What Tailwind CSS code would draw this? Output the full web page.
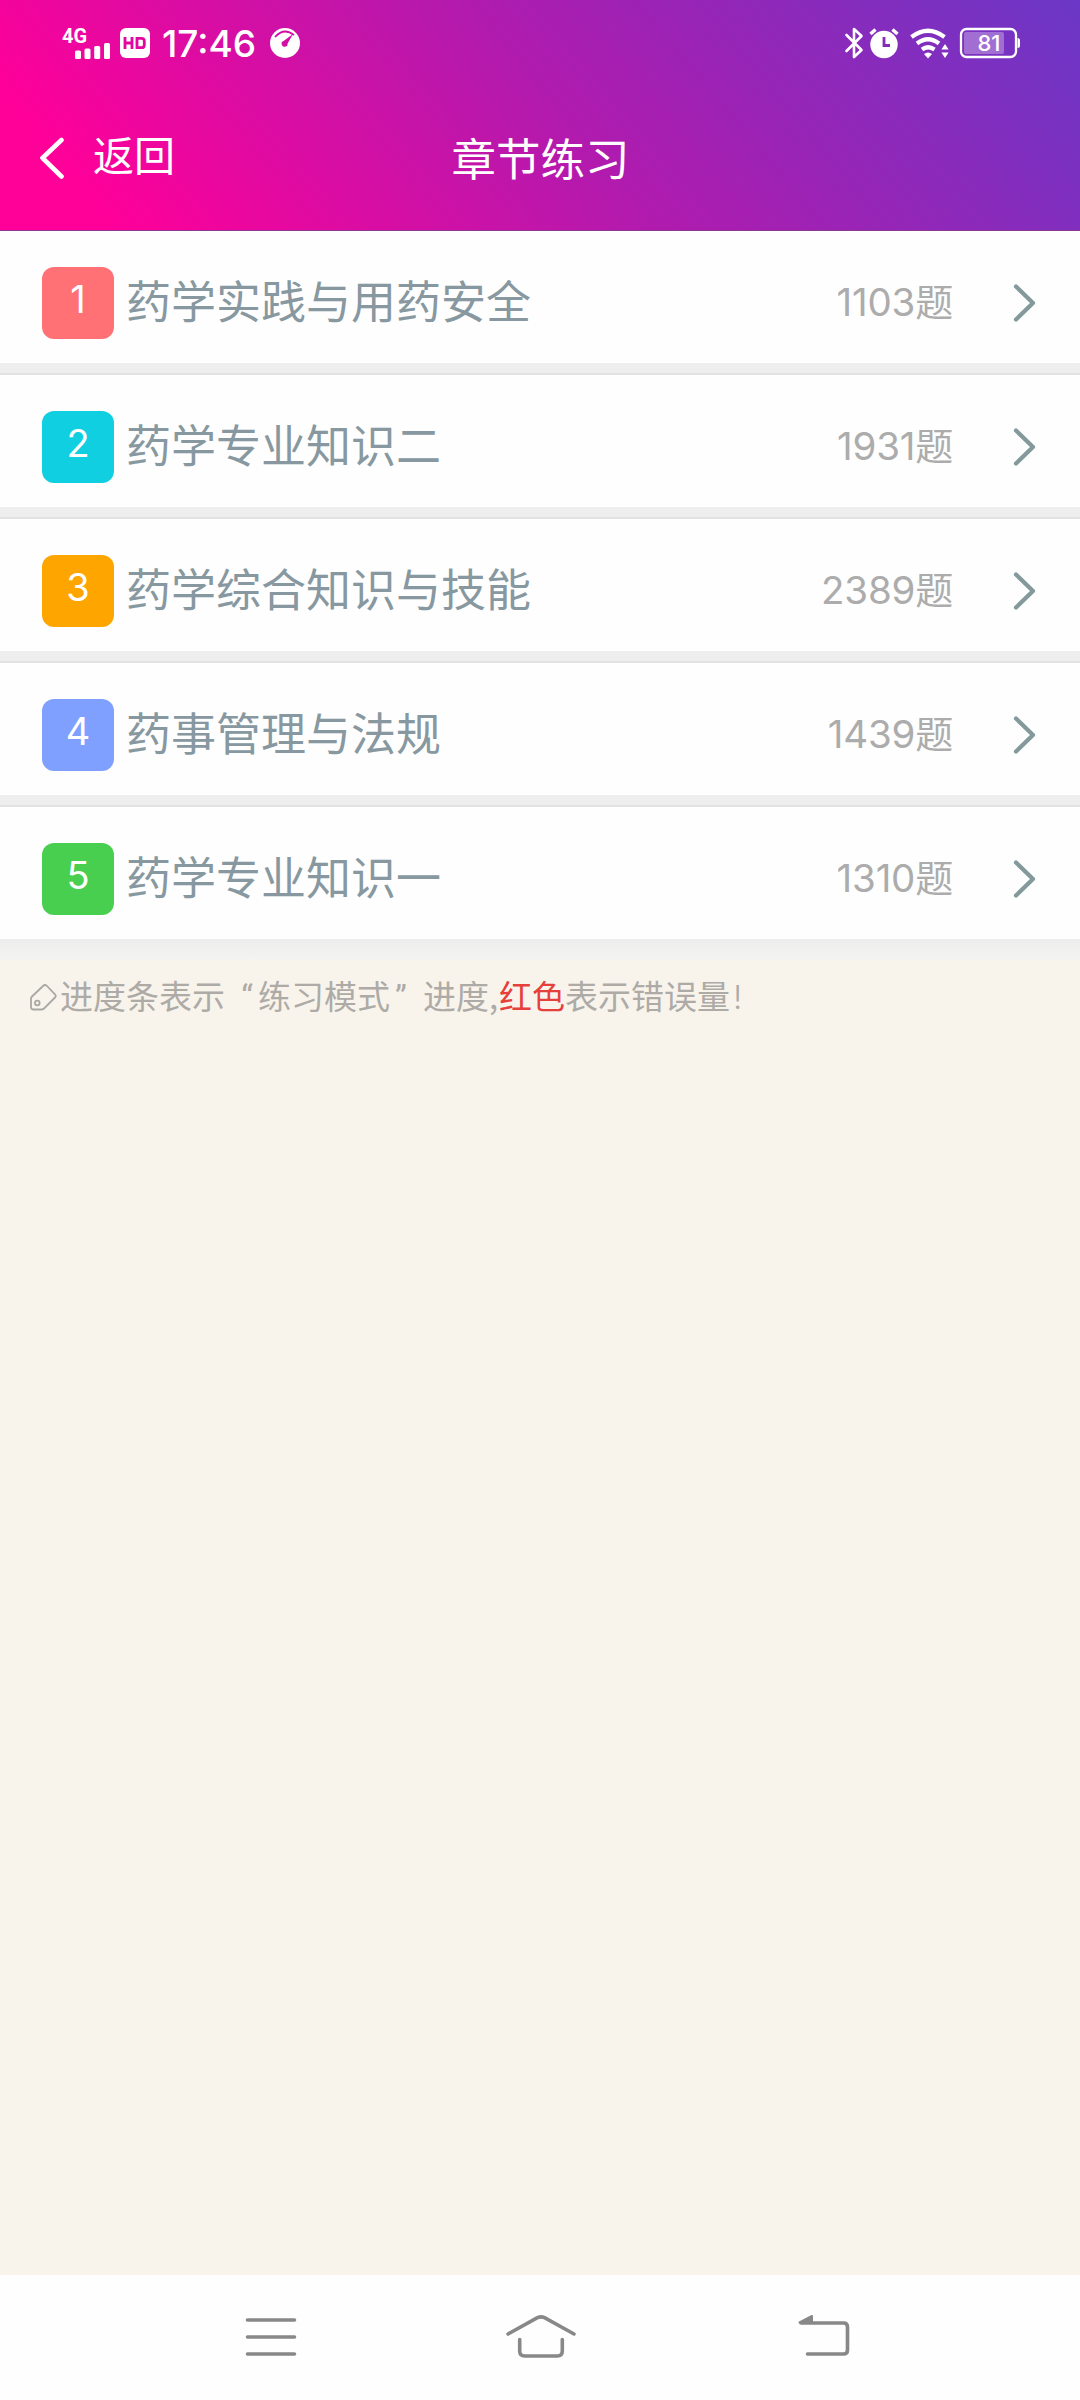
<!DOCTYPE html>
<html lang="zh-CN">
<head>
<meta charset="utf-8">
<title>章节练习</title>
<script src="https://cdn.jsdelivr.net/npm/@tailwindcss/browser@4"></script>
</head>
<body class="w-[1080px] h-[2400px] flex flex-col bg-[#f8f4ec] overflow-hidden font-['Inter','Noto_Sans_CJK_SC',sans-serif]">
<header class="h-[231px] shrink-0 flex flex-col text-white bg-[linear-gradient(50deg,#ff0099_9%,#b01bae_52%,#6b37c6)] border-b border-[#8a3a8e]">
  <div class="h-[86px] flex items-center justify-between pl-[56px] pr-[58px]">
    <div class="flex items-center">
      <svg class="w-[56px] h-[44px]" viewBox="56 20 56 44" fill="#fff">
        <text x="62" y="42" font-family="Roboto" font-weight="700" font-size="20" textLength="25" lengthAdjust="spacingAndGlyphs">4G</text>
        <rect x="75" y="49.500" width="6" height="8.500" rx="1.500"/><rect x="84.500" y="47.500" width="6" height="10.500" rx="1.500"/><rect x="94.200" y="45" width="6" height="13" rx="1.500"/><rect x="104" y="42" width="6" height="16" rx="1.500"/>
      </svg>
      <svg class="w-[30px] h-[30px] ml-2" viewBox="0 0 30 30"><rect width="30" height="30" rx="6" fill="#fff"/><path d="M5 9v12M12 9v12M5 15h7M17 10.300v9.400h4.500q2.800 0 2.800-2.800v-3.800q0-2.800-2.800-2.800z" fill="none" stroke="#e0069f" stroke-width="2.800"/></svg>
      <span class="ml-[12px] w-[96px] text-[37px] leading-none font-medium whitespace-nowrap">17:46</span>
      <svg class="w-[30px] h-[30px] ml-3" viewBox="0 0 30 30"><circle cx="15" cy="15" r="15" fill="#fff"/><path d="M5 9Q14-1 24 7" fill="none" stroke="#d20ca4" stroke-width="1.800"/><path d="M23 6 17.600 15.500a3 3 0 1 1-4-2.500z" fill="#d20ca4"/></svg>
    </div>
    <svg class="w-[180px] h-[36px]" viewBox="842 25 180 36" fill="none" stroke="#fff">
      <path d="m846.500 35 15 15-7.500 7V29l7.500 7-15 15" stroke-width="2.600" stroke-linejoin="round" stroke-linecap="round"/>
      <circle cx="884" cy="44.500" r="13.700" fill="#fff" stroke="none"/>
      <path d="m870.500 34 5-4.500M897.500 34l-5-4.500" stroke-width="3.400"/>
      <path d="M884 37v8.500h6" stroke="#862bb7" stroke-width="2.800"/>
      <path d="M911.500 37q16.500-12.500 33 0M917 43.500q11-8.500 22 0M922 49.500q6-4.500 12.500 0" stroke-width="4.200"/>
      <path d="M924 54q4-3 8 0l-4 4.500z" fill="#fff" stroke="none"/>
      <path d="m945 44 3.600 5.500h-7.200zM945 58l3.600-5.500h-7.200z" fill="#fff" stroke="none"/>
      <rect x="961" y="29" width="55" height="28" rx="5.500" stroke-width="2.300"/>
      <rect x="964" y="32" width="40" height="22" rx="2" fill="#fff" fill-opacity=".3" stroke="none"/>
      <path d="M1017.500 38q2.500 0 2.500 2.500v5q0 2.500-2.500 2.500z" fill="#fff" stroke="none"/>
      <text x="989" y="50.700" text-anchor="middle" font-family="Inter" font-size="21.500" font-weight="500" textLength="23" lengthAdjust="spacingAndGlyphs" fill="#fff" stroke="none">81</text>
    </svg>
  </div>
  <div class="h-[144px] grid grid-cols-3 items-start pt-[43px]">
    <div class="flex items-center pl-[39px] h-[58px]">
      <svg class="w-[26px] h-[42px]" viewBox="0 0 26 42"><path d="M22.500 3 3.500 21 22.500 39.500" fill="none" stroke="#fff" stroke-width="4.600" stroke-linecap="round" stroke-linejoin="round"/></svg>
      <span class="ml-[28px] text-[41px] leading-[58px] -mt-1">返回</span>
    </div>
    <h1 class="text-center text-[44.500px] leading-[60px] pt-px pl-px">章节练习</h1>
  </div>
</header>
<main id="list" class="flex flex-col shrink-0"></main>
<p class="flex items-center pl-[29px] mt-[12px] h-[50px] text-[33px] text-[#aeaba7] font-['Noto_Sans_CJK_SC',sans-serif] whitespace-nowrap">
  <svg class="w-[29px] h-[29px] mr-[2px]" viewBox="0 0 29 29" fill="none" stroke="#aaa8a4" stroke-width="1.800"><path d="M2 15.500v8.500q0 2.500 2.500 2.500h8q1.500 0 2.500-1l11-11q1.500-1.500 0-3.200L18 3q-2-2-4 0L3 13.500q-1 1-1 2z"/><circle cx="8.300" cy="20" r="2.300"/></svg>
  <span>进度条表示<span class="inline-block w-[33px] pr-[5px] text-right font-['Roboto']">“</span>练习模式<span class="inline-block w-[33px] pl-[5px] font-['Roboto']">”</span>进度<span class="inline-block w-[10px]">,</span><span class="text-[#e5403b]">红色</span>表示错误量<span class="ml-[3px] font-light font-['Inter']">!</span></span>
</p>
<nav class="mt-auto h-[125px] shrink-0 bg-[#fefefe]">
  <svg class="w-full h-full" viewBox="0 2275 1080 125" fill="none" stroke="#888" stroke-linecap="round" stroke-linejoin="round">
    <path d="M247.500 2320h47M247.500 2337h47M247.500 2354h47" stroke-width="3.600"/>
    <path d="M508 2334 537.500 2317.700q3.500-1.600 7 0L574 2334M519.700 2339.500v11.500q0 5 5 5h32.600q5 0 5-5v-11.500" stroke-width="3.600"/>
    <path d="M801 2323h42.500q4 0 4 4v23q0 4-4 4H807.500" stroke-width="3.600"/><path d="M799.500 2322.500 812 2316v6.500z" fill="#888" stroke-width="2"/>
  </svg>
</nav>
<script>
const rows = [
  ['药学实践与用药安全', '1103', '#ff7175'],
  ['药学专业知识二', '1931', '#10cfe0'],
  ['药学综合知识与技能', '2389', '#ffa500'],
  ['药事管理与法规', '1439', '#80a0ff'],
  ['药学专业知识一', '1310', '#48cf50'],
];
document.getElementById('list').innerHTML = rows.map(([name, count, color], i) => `
  <section class="flex flex-col">
    <div class="h-[132px] bg-[#fefefe] flex items-center pl-[42px] pr-[43px] pt-3">
      <div class="w-[72px] h-[72px] rounded-[12px] text-white text-[38px] leading-[65px] text-center font-normal" style="background:${color}">${i + 1}</div>
      <div class="ml-[12px] text-[45px] leading-[66px] text-[#8798a0]">${name}</div>
      <div class="ml-auto pb-[2px] text-[38.500px] leading-[66px] text-[#acacac] tracking-[-0.2px]">${count}<span class="text-[38px]">题</span></div>
      <svg class="w-[24px] h-[40px] ml-[60px]" viewBox="0 0 24 40"><path d="M3 3.500 20 20 3 36.500" fill="none" stroke="#84999b" stroke-width="4.200" stroke-linecap="round" stroke-linejoin="round"/></svg>
    </div>
    ${i < 4 ? '<div class="h-3 bg-[#eee] border-b-2 border-[#e2e2e2]"></div>' : '<div class="h-[21px] bg-linear-to-b from-[#ededed] to-[#f4f4f1]"></div>'}
  </section>`).join('');
</script>
</body>
</html>
